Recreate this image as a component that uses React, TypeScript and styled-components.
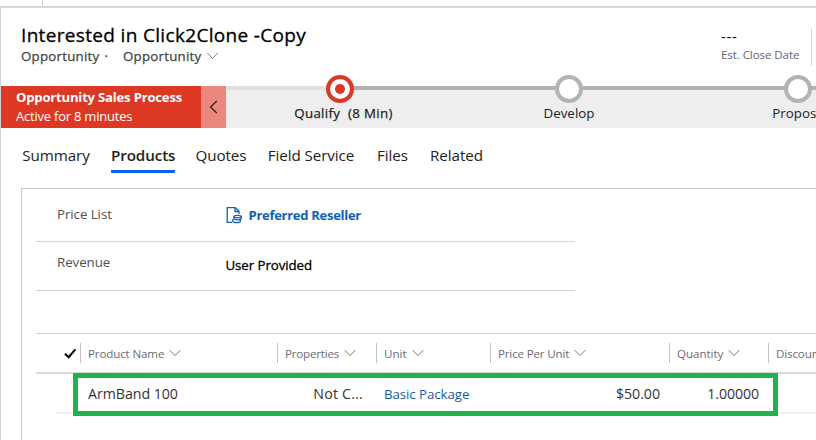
import React from "react";
import styled, { createGlobalStyle } from "styled-components";

const Global = createGlobalStyle`
  * { box-sizing: border-box; }
  html, body { margin: 0; overflow: hidden; background: #fff; }
  body { font-family: "Open Sans", "Noto Sans", sans-serif; }
`;

const Page = styled.div`
  width: 816px;
  height: 440px;
  overflow: hidden;
  display: flex;
  flex-direction: column;
  background: #fff;
`;

const CommandBar = styled.div`
  height: 8px;
  flex: none;
  border-bottom: 2px solid #d6d6d6;
  display: flex;
`;

const CommandDivider = styled.div`
  width: 1px;
  height: 6px;
  margin-left: 42px;
  background: #d0d0d0;
`;

const Form = styled.main`
  flex: 1;
  border-left: 1px solid #d2d2d2;
  display: flex;
  flex-direction: column;
`;

const Header = styled.header`
  height: 78px;
  flex: none;
  padding: 14px 0 0 20px;
  display: flex;
  justify-content: space-between;
`;

const Title = styled.h1`
  margin: 0;
  font-size: 19px;
  font-weight: 400;
  -webkit-text-stroke: 0.3px #000;
  line-height: 26px;
  letter-spacing: 0.33px;
  color: #000;
  white-space: nowrap;
`;

const Subtitle = styled.div`
  display: flex;
  align-items: center;
  height: 18px;
  margin-top: -1px;
  font-size: 13.3px;
  -webkit-text-stroke: 0.25px #444;
  line-height: 18px;
  letter-spacing: 0.24px;
  color: #444;
`;

const Dot = styled.span`
  width: 23.5px;
  padding-left: 5px;
`;

const SubtitleChevron = styled.span`
  display: flex;
  margin-left: 5px;
`;

const CloseDate = styled.div`
  width: 95px;
  margin-top: 6px;
  height: 38px;
  display: flex;
`;

const CloseDateText = styled.div`
  width: 90px;
  flex: none;
  white-space: nowrap;
`;

const CloseValue = styled.div`
  margin-top: -1px;
  height: 19px;
  font-size: 15px;
  line-height: 19px;
  letter-spacing: 0.7px;
  color: #000;
`;

const CloseLabel = styled.div`
  font-size: 11.6px;
  line-height: 17px;
  letter-spacing: -0.1px;
  color: #666;
`;

const CloseDivider = styled.div`
  width: 1px;
  background: #d6d6d6;
`;

const Process = styled.section`
  height: 42px;
  flex: none;
  display: flex;
`;

const ProcessName = styled.div`
  width: 200px;
  flex: none;
  padding: 2px 0 0 15px;
  background: #dc3823;
  color: #fff;
  white-space: nowrap;
`;

const ProcessTitle = styled.div`
  font-size: 13.1px;
  font-weight: 700;
  line-height: 19px;
  letter-spacing: -0.2px;
`;

const ProcessAge = styled.div`
  font-size: 13px;
  line-height: 19px;
  letter-spacing: -0.22px;
`;

const Collapse = styled.div`
  width: 25px;
  flex: none;
  background: #ea887b;
  display: flex;
  align-items: center;
  justify-content: center;
`;

const Stages = styled.div`
  flex: 1;
  min-width: 0;
  display: flex;
  background: linear-gradient(to right, #e0e0e0 114px, #b1b1b1 114px) top / 100% 4px no-repeat #eee;
`;

const Stage = styled.div<{ $w?: number }>`
  width: ${(p) => p.$w ?? 229}px;
  flex: none;
  display: flex;
  flex-direction: column;
  align-items: center;
  margin-top: -11px;

  &:first-child {
    margin-left: -1px;
  }
`;

const StageRing = styled.div<{ $active?: boolean }>`
  width: 28px;
  height: 28px;
  border-radius: 50%;
  border: 4px solid ${(p) => (p.$active ? "#dc3823" : "#b3b3b3")};
  background: #fff;
  display: flex;
  align-items: center;
  justify-content: center;
`;

const StageCore = styled.div`
  width: 10px;
  height: 10px;
  border-radius: 50%;
  background: #dc3823;
`;

const StageLabel = styled.div<{ $active?: boolean }>`
  margin-top: 1px;
  font-size: 13.3px;
  -webkit-text-stroke: ${(p) => (p.$active ? 0.25 : 0)}px #222;
  line-height: 18px;
  letter-spacing: ${(p) => (p.$active ? 0.35 : 0.05)}px;
  padding-left: ${(p) => (p.$active ? 8 : 1)}px;
  color: #222;
  white-space: pre;
`;

const Tabs = styled.nav`
  height: 60px;
  flex: none;
  padding: 16px 0 0 20px;
  display: flex;
`;

const Tab = styled.div<{ $w: number; $active?: boolean }>`
  width: ${(p) => p.$w}px;
  height: 29px;
  margin-right: 20px;
  font-size: 15.2px;
  line-height: 22px;
  font-weight: ${(p) => (p.$active ? 600 : 400)};
  letter-spacing: ${(p) => (p.$active ? -0.1 : -0.08)}px;
  text-align: center;
  white-space: nowrap;
  color: #222;
  border-bottom: 3px solid ${(p) => (p.$active ? "#0c61f2" : "transparent")};
  border-radius: 1px;
`;

const Panel = styled.section`
  flex: 1;
  margin-left: 20px;
  padding-left: 14px;
  border: 1px solid #c8c8c8;
  border-width: 1px 0 0 1px;
`;

const Field = styled.div<{ $h: number; $top: number }>`
  width: 539px;
  height: ${(p) => p.$h}px;
  padding: ${(p) => p.$top}px 0 0 21px;
  display: flex;
  border-bottom: 1px solid #d3d3d3;
  font-size: 13.3px;
  line-height: 18px;
  white-space: nowrap;
`;

const FieldLabel = styled.div`
  width: 168.5px;
  letter-spacing: -0.06px;
  color: #505050;
`;

const FieldValue = styled.div`
  padding-top: 3px;
  -webkit-text-stroke: 0.3px #000;
  letter-spacing: -0.08px;
  color: #000;
`;

const Lookup = styled.div`
  padding-top: 1px;
  display: flex;
  gap: 6px;
  font-weight: 700;
  font-size: 13px;
  letter-spacing: -0.28px;
  color: #1160b7;
`;

const Grid = styled.div`
  margin-top: 42px;
  border-top: 1px solid #d3d3d3;
`;

const GridHead = styled.div`
  height: 40px;
  display: flex;
  align-items: center;
  border-bottom: 2px solid #dadada;
`;

const SelectCell = styled.div`
  width: 44px;
  flex: none;
  height: 20px;
  padding-left: 28px;
  display: flex;
  align-items: center;
`;

const HeadCell = styled.div<{ $w: number; $ls?: number }>`
  width: ${(p) => p.$w}px;
  flex: none;
  height: 20px;
  padding-left: 7px;
  border-left: 1px solid #c4c4c4;
  display: flex;
  align-items: center;
  gap: 5px;
  font-size: 11.6px;
  letter-spacing: ${(p) => p.$ls ?? -0.14}px;
  white-space: nowrap;
  color: #6c6c74;
`;

const GridRow = styled.div`
  position: relative;
  height: 40px;
  margin-left: 20px;
  padding-left: 24px;
  display: flex;
  align-items: center;
  border-bottom: 2px solid #f1f1f1;
`;

const Cell = styled.div<{ $w: number; $right?: number; $ls?: number }>`
  width: ${(p) => p.$w}px;
  flex: none;
  padding-left: 8px;
  padding-right: ${(p) => p.$right ?? 0}px;
  text-align: ${(p) => (p.$right ? "right" : "left")};
  font-size: 14.2px;
  letter-spacing: ${(p) => p.$ls ?? -0.04}px;
  white-space: nowrap;
  color: #333;
`;

const LinkCell = styled(Cell)`
  padding-top: 1px;
  font-size: 13.3px;
  letter-spacing: -0.08px;
  color: #1160a6;
`;

const Highlight = styled.div`
  position: absolute;
  left: 17px;
  top: -1px;
  width: 705px;
  height: 43px;
  border: 5px solid #22b14c;
`;

const Chevron = ({ w = 12, color = "#777" }: { w?: number; color?: string }) => (
  <svg width={w} height="8" viewBox="0 0 12 8" fill="none" stroke={color} strokeWidth="1" preserveAspectRatio="none">
    <path d="M.5 1 6 6.5 11.5 1" />
  </svg>
);

const PriceListIcon = () => (
  <svg width="17" height="18" viewBox="0 0 17 18" fill="none" stroke="#1160b7" strokeWidth="1.3">
    <path d="M6 16.4H1.2V1.6H9.2L13 5.3V8" />
    <path d="M9 1.6V5.5H13" />
    <ellipse cx="11.6" cy="10.6" rx="3.7" ry="1.3" />
    <path d="M7.9 10.6v2c0 1.7 7.4 1.7 7.4 0v-2" />
    <path d="M6.8 13v2.2c0 1.9 7.6 1.9 7.6 0v-1.4" />
  </svg>
);

const columns = [
  { name: "Product Name", w: 197 },
  { name: "Properties", w: 99, ls: -0.2 },
  { name: "Unit", w: 114, ls: 0 },
  { name: "Price Per Unit", w: 179, ls: -0.17 },
  { name: "Quantity", w: 99, ls: -0.05 },
  { name: "Discount", w: 99 },
];

const tabs = [
  { name: "Summary", w: 69 },
  { name: "Products", w: 64, active: true },
  { name: "Quotes", w: 52 },
  { name: "Field Service", w: 88 },
  { name: "Files", w: 35 },
  { name: "Related", w: 53 },
];

export default function App() {
  return (
    <>
      <Global />
      <Page>
        <CommandBar>
          <CommandDivider />
        </CommandBar>
        <Form>
          <Header>
            <div>
              <Title>Interested in Click2Clone -Copy</Title>
              <Subtitle>
                Opportunity<Dot>·</Dot>Opportunity
                <SubtitleChevron>
                  <Chevron w={11} />
                </SubtitleChevron>
              </Subtitle>
            </div>
            <CloseDate>
              <CloseDateText>
                <CloseValue>---</CloseValue>
                <CloseLabel>Est. Close Date</CloseLabel>
              </CloseDateText>
              <CloseDivider />
            </CloseDate>
          </Header>
          <Process>
            <ProcessName>
              <ProcessTitle>Opportunity Sales Process</ProcessTitle>
              <ProcessAge>Active for 8 minutes</ProcessAge>
            </ProcessName>
            <Collapse>
              <svg width="9" height="14" viewBox="0 0 9 14" fill="none" stroke="#222" strokeWidth="1.2">
                <path d="M7.8 1 1.5 7l6.3 6" />
              </svg>
            </Collapse>
            <Stages>
              <Stage>
                <StageRing $active>
                  <StageCore />
                </StageRing>
                <StageLabel $active>{"Qualify  (8 Min)"}</StageLabel>
              </Stage>
              <Stage>
                <StageRing />
                <StageLabel>Develop</StageLabel>
              </Stage>
              <Stage>
                <StageRing />
                <StageLabel>Propose</StageLabel>
              </Stage>
            </Stages>
          </Process>
          <Tabs>
            {tabs.map((t) => (
              <Tab key={t.name} $w={t.active ? t.w : t.w + (t.name === "Summary" ? 1 : 0)} $active={t.active}>
                {t.name}
              </Tab>
            ))}
          </Tabs>
          <Panel>
            <Field $h={53} $top={16}>
              <FieldLabel>Price List</FieldLabel>
              <Lookup>
                <PriceListIcon />
                Preferred Reseller
              </Lookup>
            </Field>
            <Field $h={49} $top={11}>
              <FieldLabel>Revenue</FieldLabel>
              <FieldValue>User Provided</FieldValue>
            </Field>
            <Grid>
              <GridHead>
                <SelectCell>
                  <svg width="13" height="11" viewBox="0 0 13 11" fill="none" stroke="#000" strokeWidth="2">
                    <path d="M1 5.8 4.6 9.2 11.4 1.4" />
                  </svg>
                </SelectCell>
                {columns.map((c) => (
                  <HeadCell key={c.name} $w={c.w} $ls={c.ls}>
                    {c.name}
                    <Chevron />
                  </HeadCell>
                ))}
              </GridHead>
              <GridRow>
                <Cell $w={197}>ArmBand 100</Cell>
                <Cell $w={99} $right={13} $ls={0.2}>Not C...</Cell>
                <LinkCell $w={114}>Basic Package</LinkCell>
                <Cell $w={179} $right={9} $ls={-0.05}>$50.00</Cell>
                <Cell $w={99} $right={9} $ls={-0.1}>1.00000</Cell>
                <Highlight />
              </GridRow>
            </Grid>
          </Panel>
        </Form>
      </Page>
    </>
  );
}
